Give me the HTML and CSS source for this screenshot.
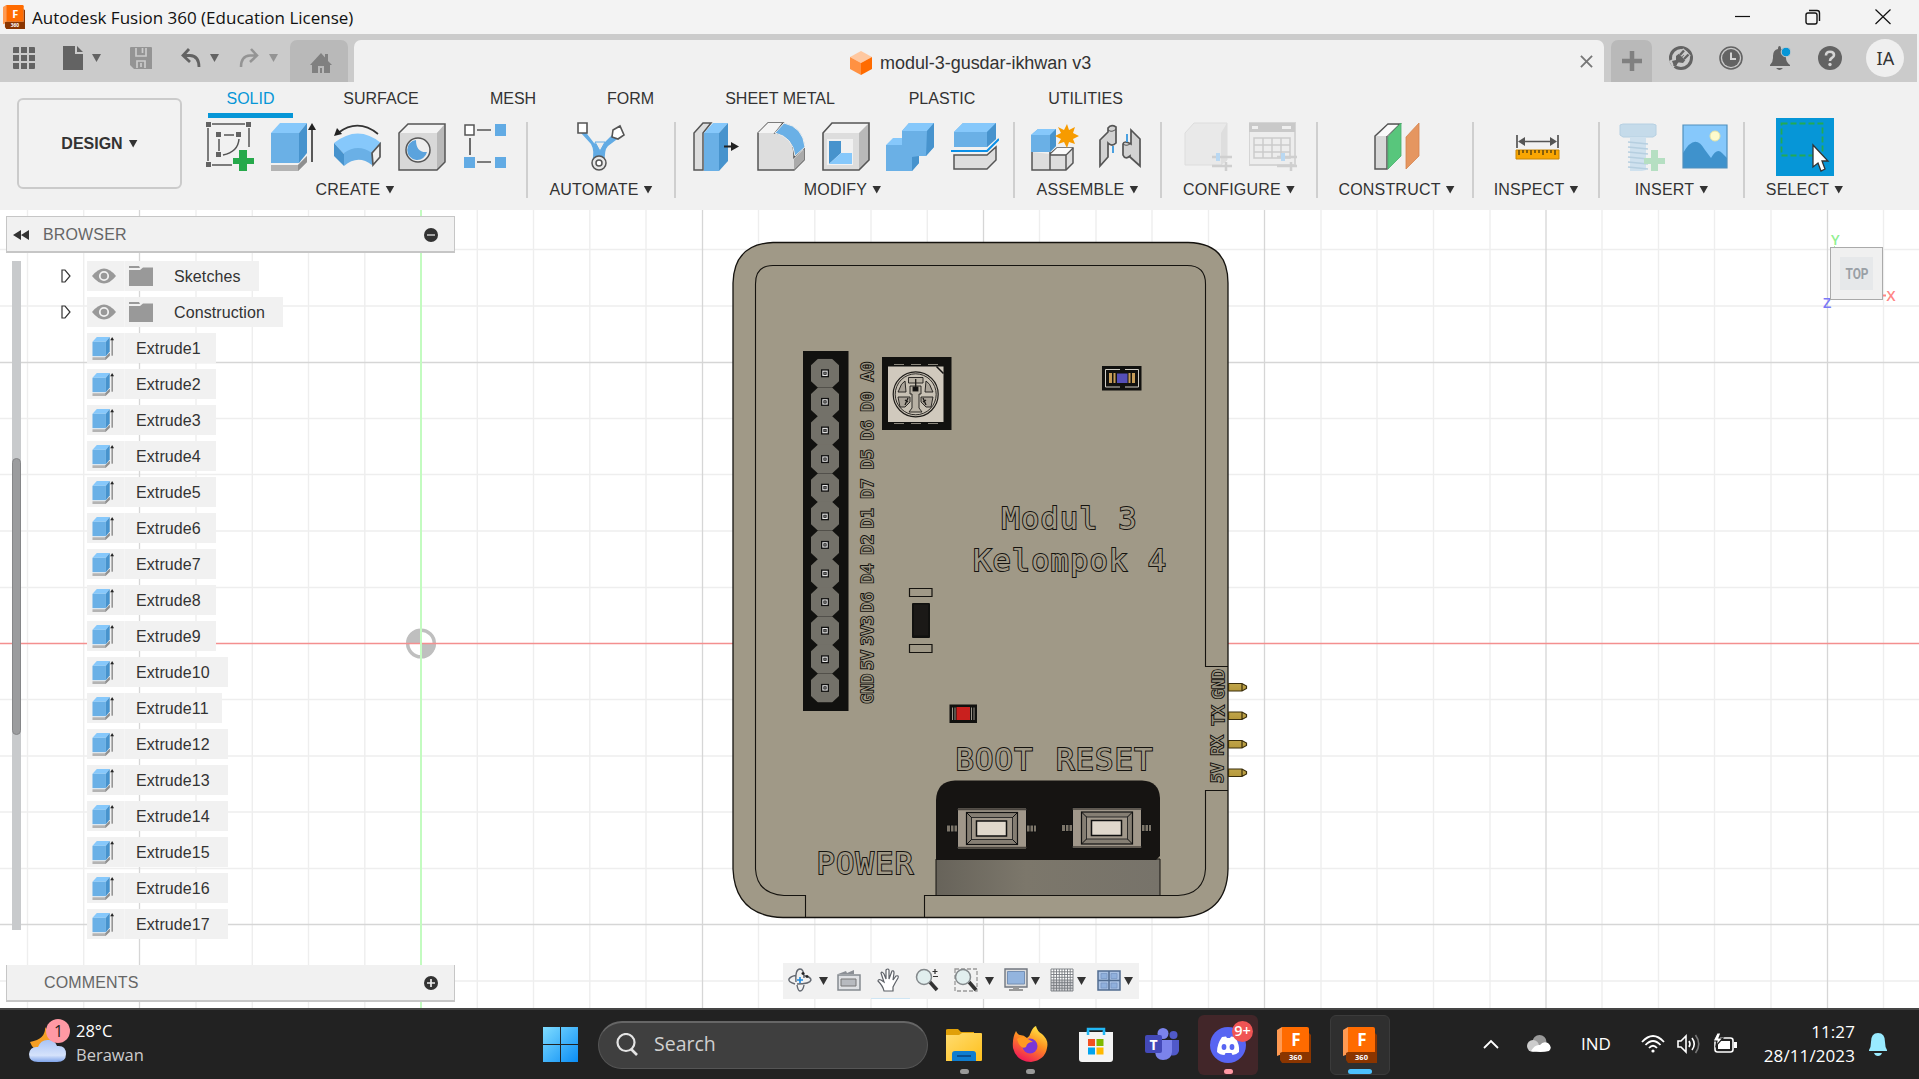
FILE: index.html
```html
<!DOCTYPE html>
<html lang="en">
<head>
<meta charset="utf-8">
<title>Autodesk Fusion 360 (Education License)</title>
<link rel="stylesheet" href="styles.css">
</head>
<body>
<svg class="defs" width="0" height="0">
  <defs>
    <symbol id="fusion" viewBox="0 0 34 36">
      <path d="M0 3L5 0V27L0 29Z" fill="#ff9a52"/>
      <path d="M5 0H30Q32 0 32 2V25H5Z" fill="#ff6b00"/>
      <path d="M32 6L34 8V36H5L3 33V26L5 25H32Z" fill="#8a3500"/>
      <text x="19" y="19" text-anchor="middle" font-family="Open Sans, sans-serif" font-weight="700" font-size="17" fill="#fff">F</text>
      <text x="18.500" y="33" text-anchor="middle" font-family="Open Sans, sans-serif" font-weight="700" font-size="7.500" fill="#fff">360</text>
    </symbol>
    <symbol id="extrude" viewBox="0 0 48 50">
      <path d="M1 43H28L37 34V40L28 49H1Z" fill="#b3b3b3"/>
      <path d="M28 43L37 34V40L28 49Z" fill="#8f8f8f"/>
      <path d="M1 11L10 1H37L29 11Z" fill="#86c8fb"/>
      <rect x="1" y="11" width="28" height="30" fill="#6ab0e6"/>
      <path d="M29 11L37 1V31L29 41Z" fill="#4793cd"/>
      <path d="M42 6V40" stroke="#333" stroke-width="1.600"/>
      <path d="M38 8L42 1L46 8Z" fill="#222"/>
    </symbol>
    <symbol id="eye" viewBox="0 0 24 16">
      <path d="M0 8Q12 -7 24 8Q12 23 0 8Z" fill="#999"/>
      <circle cx="12" cy="8" r="4.200" fill="#999" stroke="#f1f1f1" stroke-width="1.800"/>
    </symbol>
    <symbol id="folder" viewBox="0 0 24 20">
      <path d="M0 0H10L11 2H0ZM0 4H11L14 1.500H24V20H0Z" fill="#999"/>
    </symbol>
    <symbol id="expand" viewBox="0 0 10 14">
      <path d="M1 1V13L4 13L9 7L4 1Z" fill="#fff" stroke="#333" stroke-width="1.200"/>
    </symbol>
    <symbol id="pin" viewBox="-14.500 -14.500 29 29">
      <path d="M-7 -14.500H7L14 -8V8L7 14.500H-7L-14 8V-8Z" fill="#737169"/>
      <rect x="-4" y="-4" width="8" height="8" fill="#111"/>
      <rect x="-2.700" y="-2.700" width="5.400" height="5.400" fill="#e4e4e4"/>
      <rect x="-1.200" y="-1.200" width="2.400" height="2.400" fill="#777" stroke="#111" stroke-width=".7"/>
    </symbol>
    <symbol id="tact" viewBox="0 0 92 42">
      <g fill="#7d766a" stroke="#111"><path d="M1 17.500H12V24.500H1ZM81 17.500H91V24.500H81ZM5 17.500V24.500M8.500 17.500V24.500M84.500 17.500V24.500M88 17.500V24.500"/></g>
      <rect x="12" y=".5" width="69" height="41" fill="#a0978a" stroke="#111"/>
      <path d="M12 2H81M12 40H81" stroke="#4a453f" stroke-width="1.500"/>
      <rect x="21" y="5" width="51" height="32" fill="#857e73" stroke="#111" stroke-width="1.200"/>
      <rect x="26" y="10" width="41" height="22" fill="#a0978a" stroke="#222" stroke-width=".9"/>
      <path d="M21 5L26 10M72 5L67 10M21 37L26 32M72 37L67 32" stroke="#111"/>
      <rect x="31" y="13.500" width="30" height="15" fill="#e0d8cc" stroke="#111" stroke-width="1.500"/>
    </symbol>
    <linearGradient id="win" x1="0" y1="0" x2="1" y2="1"><stop offset="0" stop-color="#7fdcff"/><stop offset="1" stop-color="#0a8df5"/></linearGradient>
    <linearGradient id="cloud" x1="0" y1="0" x2="0" y2="1"><stop offset="0" stop-color="#a9c4f5"/><stop offset=".7" stop-color="#d5e2fb"/><stop offset="1" stop-color="#7ea3ea"/></linearGradient>
    <linearGradient id="fire" x1=".8" y1="0" x2=".3" y2="1"><stop offset="0" stop-color="#fff04a"/><stop offset=".45" stop-color="#ff9020"/><stop offset="1" stop-color="#f0145a"/></linearGradient>
    <linearGradient id="fold" x1="0" y1="0" x2="1" y2="1"><stop offset="0" stop-color="#ffdc70"/><stop offset="1" stop-color="#ffc01c"/></linearGradient>
    <linearGradient id="wall" x1="0" y1="0" x2="1" y2="0"><stop offset="0" stop-color="#67635a"/><stop offset=".4" stop-color="#7c776b"/><stop offset="1" stop-color="#77736a"/></linearGradient>
    <linearGradient id="gold" x1="0" y1="0" x2="0" y2="1"><stop offset="0" stop-color="#c0a54a"/><stop offset="1" stop-color="#b6993c"/></linearGradient>
  </defs>
</svg>

<header class="titlebar">
  <svg class="app-icon" viewBox="0 0 34 36" preserveAspectRatio="none"><use href="#fusion"/></svg>
  <span class="app-title">Autodesk Fusion 360 (Education License)</span>
  <div class="window-controls">
    <svg viewBox="0 0 16 16"><path d="M0 7.500H15" stroke="#111" stroke-width="1.200"/></svg>
    <svg viewBox="0 0 16 16" fill="none" stroke="#111" stroke-width="1.400"><rect x="1" y="4" width="11" height="11" rx="2"/><path d="M4 1.500H12Q14.500 1.500 14.500 4V12"/></svg>
    <svg viewBox="0 0 16 16" stroke="#111" stroke-width="1.200"><path d="M.5 .5L15.500 15M15.500 .5L.5 15"/></svg>
  </div>
</header>

<nav class="tabbar">
  <div class="quick">
    <svg class="q-grid" viewBox="0 0 22 22" fill="#636363"><path d="M0 1Q0 0 1 0H6V6H0ZM8 0H14V6H8ZM16 0H21Q22 0 22 1V6H16ZM0 8H6V14H0ZM8 8H14V14H8ZM16 8H22V14H16ZM0 16H6V22H1Q0 22 0 21ZM8 16H14V22H8ZM16 16H22V21Q22 22 21 22H16Z"/></svg>
    <svg class="q-file" viewBox="0 0 20 24"><path d="M0 0H12V8H20V24H0ZM14 0L20 6H14Z" fill="#636363"/></svg>
    <i class="caret dim"></i>
    <svg class="q-save" viewBox="0 0 22 22"><path d="M1 0H21Q22 0 22 1V22H4L0 18V1Q0 0 1 0Z" fill="#949494"/><path d="M6 1V9H16V1M7 21V14H15V21M11 16V20M12.500 1V6" fill="none" stroke="#cbcbcb" stroke-width="1.700"/></svg>
    <svg class="q-undo" viewBox="0 0 20 20" fill="none" stroke="#636363" stroke-width="2.800"><path d="M8 1L2 7.500L9 14M2 7.500H9Q18 8 18 19"/></svg>
    <i class="caret dim"></i>
    <svg class="q-redo" viewBox="0 0 20 20" fill="none" stroke="#949494" stroke-width="2.500"><path d="M12 1L18 7.500L11 14M18 7.500H11Q2 8 2 19"/></svg>
    <i class="caret faint"></i>
  </div>
  <div class="home-tab"><svg viewBox="0 0 22 20"><path d="M11 0L15 4.500V1H18V8L22 12H20V20H14V13H8V20H2V12H0ZM10 15H12V20H10Z" fill="#808080"/></svg></div>
  <div class="doc-tab">
    <svg class="doc-icon" viewBox="0 0 22 24"><path d="M11 0L22 6L11 12L0 6Z" fill="#ffc8a0"/><path d="M0 6L11 12V24L0 18Z" fill="#ff9142"/><path d="M22 6L11 12V24L22 18Z" fill="#ff6b00"/></svg>
    <span>modul-3-gusdar-ikhwan v3</span>
    <svg class="doc-close" viewBox="0 0 14 14" stroke="#777" stroke-width="2"><path d="M1 1L13 13M13 1L1 13"/></svg>
  </div>
  <div class="add-tab"><svg viewBox="0 0 20 20"><path d="M10 0V20M0 10H20" stroke="#808080" stroke-width="4.500"/></svg></div>
  <div class="status-icons">
    <svg viewBox="0 0 24 24"><circle cx="12" cy="12" r="10.500" fill="none" stroke="#636363" stroke-width="3"/><path d="M0 15L6 12L9 18L4 22Z" fill="#cbcbcb"/><path d="M3 15L7 14L8 19L5 20Z" fill="#636363"/><path d="M7 16V10L12 6L18 12L14 17Z" fill="#636363"/><path d="M11 9L16 4M15 13L20 8" stroke="#cbcbcb" stroke-width="5"/><path d="M11 9L15 4.500M15 13L19.500 8.500M9 15L5 20" stroke="#636363" stroke-width="2.400"/></svg>
    <svg viewBox="0 0 24 24"><circle cx="12" cy="12" r="11" fill="none" stroke="#636363" stroke-width="1.600"/><circle cx="12" cy="12" r="8.900" fill="#636363"/><path d="M12 6.500V13H17" fill="none" stroke="#d5d5d5" stroke-width="2"/></svg>
    <svg viewBox="0 0 24 24"><path d="M2 19Q5 16 5 12V10Q5 4 10 3Q10 0 11.500 0Q13 0 13 3Q18 4 18 10V12Q18 16 22 19V20H2ZM8 22H15Q13 24 11.500 24Q10 24 8 22Z" fill="#636363"/><circle cx="18" cy="6" r="4.800" fill="#0696d7" stroke="#cbcbcb"/></svg>
    <svg viewBox="0 0 24 24"><circle cx="12" cy="12" r="12" fill="#636363"/><path d="M8 9.500Q8 5.800 12 5.800Q16 5.800 16 9Q16 11 13.800 12Q12 13 12 15" fill="none" stroke="#d5d5d5" stroke-width="2.600"/><circle cx="12" cy="18.500" r="1.700" fill="#d5d5d5"/></svg>
    <div class="avatar">IA</div>
  </div>
</nav>

<section class="ribbon">
  <button class="workspace">DESIGN <i class="caret"></i></button>
  <div class="toolbox">
    <div class="tabs">
      <span class="t1 active">SOLID</span><span class="t2">SURFACE</span><span class="t3">MESH</span><span class="t4">FORM</span><span class="t5">SHEET METAL</span><span class="t6">PLASTIC</span><span class="t7">UTILITIES</span>
    </div>
    <div class="groups">
      <div class="group g-create">
        <div class="icons">
          <svg viewBox="0 0 48 50"><g fill="none" stroke="#555" stroke-width="1.500"><path d="M2 6V39M6 2H39M43 6V25M6 43H26M13 17V29M18 13H28M33 17Q32 30 17 33"/></g><path d="M0 0H5V5H0ZM40 0H45V5H40ZM0 40H5V45H0ZM10 10H15V15H10ZM30 10H35V15H30ZM10 30H15V35H10Z" fill="#636363"/><path d="M33 28H41V36H48V42H41V49H33V42H27V36H33Z" fill="#26a94b"/></svg>
          <svg viewBox="0 0 48 50"><use href="#extrude"/></svg>
          <svg viewBox="0 0 48 50"><path d="M0 21Q24 2 47 21L38 32Q24 24 10 32Z" fill="#86c8fb"/><path d="M0 21V34L10 44V32Z" fill="#4793cd"/><path d="M10 31Q24 21 38 31V43Q24 32 10 44Z" fill="#6ab0e6"/><path d="M38 31L46 22V35L39 43Z" fill="#eee" stroke="#555" stroke-width="1.700"/><path d="M4 11Q24 -4 44 12" fill="none" stroke="#333" stroke-width="1.700"/><path d="M0 14L3 6L8 12Z" fill="#222"/></svg>
          <svg viewBox="0 0 48 50"><path d="M1 11L10 2H47V40L39 48H1Z" fill="#d8d8d8"/><path d="M1 11L10 2H47L39 11Z" fill="#f3f3f3"/><path d="M39 11L47 2V40L39 48Z" fill="#b9b9b9"/><path d="M1 11L10 2H47V40L39 48H1Z" fill="none" stroke="#555" stroke-width="1.500"/><circle cx="20" cy="28" r="12" fill="#eee" stroke="#555" stroke-width="1.500"/><path d="M18 18A10 10 0 1 0 29 30Q18 31 18 18Z" fill="#5ba3dd"/></svg>
          <svg viewBox="0 0 48 50"><path d="M15 8H29M8 16V33M15 40H29" stroke="#555" stroke-width="1.700"/><path d="M3 3H12V13H3Z" fill="#fff" stroke="#555" stroke-width="1.500"/><path d="M33 2H44V14H33ZM2 35H13V46H2ZM33 35H44V46H33Z" fill="#62abe4"/></svg>
        </div>
        <div class="label">CREATE <i class="caret"></i></div>
      </div>
      <div class="group g-automate">
        <div class="icons"><svg viewBox="0 0 48 50"><path d="M7 8L17 21Q22 24 28 20L38 10L43 15L31 24Q27 28 28 40A8 8 0 0 1 15 40Q18 29 14 22L4 11Z" fill="#62abe4"/><path d="M18 20H28L23 29Z" fill="#eee" stroke="#62abe4"/><path d="M1 1H10V11H1ZM36 8L43 4L47 13L41 17L35 15Z" fill="#fff" stroke="#555" stroke-width="1.600"/><circle cx="22" cy="41" r="7" fill="#e8e8e8" stroke="#555" stroke-width="1.500"/><circle cx="22" cy="41" r="3" fill="#fff" stroke="#555" stroke-width="1.500"/></svg></div>
        <div class="label">AUTOMATE <i class="caret"></i></div>
      </div>
      <div class="group g-modify">
        <div class="icons">
          <svg viewBox="0 0 48 50"><path d="M1 48V11L10 1H18L10 11V48Z" fill="#ddd" stroke="#555" stroke-width="1.500"/><path d="M11 11H26V49H11Z" fill="#6ab0e6"/><path d="M11 11L20 1H35L26 11Z" fill="#86c8fb"/><path d="M26 11L35 1V39L26 49Z" fill="#4793cd"/><path d="M31 24.500H39" stroke="#222" stroke-width="2"/><path d="M38 20L46 24.500L38 29Z" fill="#222"/></svg>
          <svg viewBox="0 0 48 50"><path d="M1 48V11L11 1H26L18 11Q38 13 37 35L47 25V38L37 48Z" fill="#ddd" stroke="#555" stroke-width="1.500"/><path d="M18 11L27 1Q46 5 48 25L38 34Q36 15 18 11Z" fill="#6ab0e6" stroke="#eee"/><path d="M1 11L11 1H25L17 11Z" fill="#f4f4f4"/><path d="M37 37L47 27V38L37 48Z" fill="#aaa"/></svg>
          <svg viewBox="0 0 48 50"><path d="M1 11L10 1H47V38L37 48H1Z" fill="#f3f3f3"/><path d="M1 11H37V48H1Z" fill="#ddd"/><path d="M37 11L47 1V38L37 48Z" fill="#b9b9b9"/><path d="M1 11L10 1H47V38L37 48H1Z" fill="none" stroke="#555" stroke-width="1.600"/><path d="M5 17H31V43H5Z" fill="#f1f1f1"/><path d="M7 19H19V31L7 42Z" fill="#4793cd"/><path d="M7 42L19 31H30V42Z" fill="#86c8fb"/></svg>
          <svg viewBox="0 0 48 50"><path d="M0 23H16V9L23 1H48V25L40 34H33V41L26 49H0Z" fill="#6ab0e6"/><path d="M16 9L23 1H48L41 9ZM0 23L7 16H16V23Z" fill="#86c8fb"/><path d="M41 9L48 1V25L40 34ZM33 34V41L26 49V35Z" fill="#4793cd"/></svg>
          <svg viewBox="0 0 48 50"><path d="M3 10L12 1H45V17L36 25H3Z" fill="#6ab0e6"/><path d="M3 10L12 1H45L36 10Z" fill="#86c8fb"/><path d="M36 10L45 1V17L36 25Z" fill="#4793cd"/><path d="M0 29H36L48 17" fill="none" stroke="#0a90e8" stroke-width="2"/><path d="M3 33H36L45 25V38L36 47H3Z" fill="#ddd" stroke="#555" stroke-width="1.500"/></svg>
        </div>
        <div class="label">MODIFY <i class="caret"></i></div>
      </div>
      <div class="group g-assemble">
        <div class="icons">
          <svg viewBox="0 0 48 50"><path d="M1 30V48H35L42 41V26H26L19 32" fill="#ddd" stroke="#555" stroke-width="1.500"/><path d="M19 30V48M19 33H35V48M35 33L42 26" fill="none" stroke="#555" stroke-width="1.500"/><path d="M20 32L26 26H41L35 32Z" fill="#fafafa"/><path d="M0 13L7 7H25V24L19 30H0Z" fill="#6ab0e6"/><path d="M0 13L7 7H25L19 13Z" fill="#86c8fb"/><path d="M19 13L25 7V24L19 30Z" fill="#4793cd"/><path d="M36 2L38 8L44 5L42 11L48 14L42 17L44 22L38 20L36 26L33 20L27 22L30 17L24 14L30 11L27 5L33 8Z" fill="#f79b00"/></svg>
          <svg viewBox="0 0 48 50"><path d="M4 44V18L12 10V6Q15 2 20 5V21Q16 25 12 21V35ZM44 44V17L35 8V22Q28 18 27 22V33Q29 38 34 34V35Z" fill="#d2d2d2" stroke="#555" stroke-width="1.700"/><path d="M12 8Q16 11 20 7M27 22Q31 25 35 21" fill="none" stroke="#555"/><path d="M17 24V31M31 12V20" stroke="#4aa0e0" stroke-width="2"/></svg>
        </div>
        <div class="label">ASSEMBLE <i class="caret"></i></div>
      </div>
      <div class="group g-configure">
        <div class="icons">
          <svg viewBox="0 0 48 50"><path d="M1 11L10 1H43V38L37 43H1Z" fill="#e9e9e9" stroke="#ddd"/><path d="M37 11L43 1V38L37 43Z" fill="#dedede"/><path d="M28 35H48M28 44H48M34 31V39M42 40V49" stroke="#cfcfcf" stroke-width="2.500"/><path d="M34 31V39" stroke="#b9d8f2" stroke-width="4"/></svg>
          <svg viewBox="0 0 48 50"><path d="M0 1H46V43H0Z" fill="#ededed" stroke="#d5d5d5" stroke-width="2"/><path d="M0 1H46V10H0Z" fill="#c9c9c9"/><path d="M3 4H9V7H3ZM33 4H42V7H33Z" fill="#efefef"/><path d="M5 16H41V36H5ZM5 23H41M5 30H41M14 16V36M23 16V36M32 16V36" fill="none" stroke="#cbcbcb" stroke-width="1.500"/><path d="M28 35H48M28 44H48M42 40V49" stroke="#cfcfcf" stroke-width="2.500"/><path d="M34 31V39" stroke="#b9d8f2" stroke-width="4"/></svg>
        </div>
        <div class="label">CONFIGURE <i class="caret"></i></div>
      </div>
      <div class="group g-construct">
        <div class="icons"><svg viewBox="0 0 48 50"><path d="M2 47V14L15 2H27L14 14V47Z" fill="#d8d8d8" stroke="#555" stroke-width="1.500"/><path d="M4 14L15 3H25L14 14Z" fill="#fafafa"/><path d="M15 15L28 1V34L15 47Z" fill="#58c67c" stroke="#45b06a" stroke-width=".8"/><path d="M33 15L46 1V34L33 47Z" fill="#e59660" stroke="#d5844e" stroke-width=".8"/></svg></div>
        <div class="label">CONSTRUCT <i class="caret"></i></div>
      </div>
      <div class="group g-inspect">
        <div class="icons"><svg viewBox="0 0 48 50"><path d="M3 13V26M44 13V26M7 19.500H40" stroke="#555" stroke-width="1.700"/><path d="M4 19.500L11 15V24ZM43 19.500L36 15V24Z" fill="#555"/><path d="M2 28H45V37H2Z" fill="#f9a602" stroke="#c98605"/><path d="M5 28V33M9 28V31M13 28V31M17 28V33M21 28V31M25 28V31M29 28V33M33 28V31M37 28V31M41 28V33" stroke="#4a3a10" stroke-width="1.300"/></svg></div>
        <div class="label">INSPECT <i class="caret"></i></div>
      </div>
      <div class="group g-insert">
        <div class="icons">
          <svg viewBox="0 0 48 50"><path d="M2 3L5 2H35L38 3V13L35 15H5L2 13Z" fill="#c5dbea" stroke="#b6d0e2"/><path d="M12 15H28V48L24 49H12Z" fill="#cfe1ee"/><path d="M10 20L30 22M10 25L30 27M10 30L30 32M10 35L30 37M10 40L30 42M10 45L30 47" stroke="#b6cfe0" stroke-width="1.500"/><path d="M33 28H40V36H47V42H40V49H33V42H26V36H33Z" fill="#b5dfc2"/></svg>
          <svg viewBox="0 0 48 50"><path d="M2 3H46V46H2Z" fill="#86c8fb"/><path d="M2 31Q14 10 24 28L30 36Q36 25 41 31L46 36V46H2Z" fill="#3f92cc"/><circle cx="34" cy="14" r="5" fill="#fdfbcd" stroke="#e4e4a8"/><path d="M2 3H46V46H2Z" fill="none" stroke="#5090bd" stroke-width="1.200"/></svg>
        </div>
        <div class="label">INSERT <i class="caret"></i></div>
      </div>
      <div class="group g-select">
        <div class="icons"><svg class="select-icon" viewBox="0 0 58 58"><path d="M0 0H58V58H0Z" fill="#0696d7"/><path d="M5.500 5.500H46.500V37.500H5.500Z" fill="none" stroke="#23aa55" stroke-width="1.800" stroke-dasharray="6 3"/><path d="M37 27V49L42 45L45 53L49 51L46 43H52Z" fill="#fff" stroke="#333" stroke-width="1.300"/></svg></div>
        <div class="label">SELECT <i class="caret"></i></div>
      </div>
    </div>
  </div>
</section>

<main class="viewport">
  <svg class="scene" viewBox="0 210 1919 798" width="1919" height="798">
    <g fill="none" stroke="#eeeeee" stroke-width="1.400">
      <path d="M27.500 210V1008M83.700 210V1008M196 210V1008M252.300 210V1008M308.500 210V1008M364.800 210V1008M477.300 210V1008M533.500 210V1008M589.800 210V1008M646 210V1008M758.500 210V1008M814.800 210V1008M871 210V1008M927.300 210V1008M1039.500 210V1008M1096 210V1008M1152 210V1008M1208.500 210V1008M1321 210V1008M1377 210V1008M1433.500 210V1008M1490 210V1008M1602 210V1008M1658.500 210V1008M1714.500 210V1008M1771 210V1008M1883.500 210V1008"/>
      <path d="M0 249.500H1919M0 306H1919M0 418.500H1919M0 474.500H1919M0 531H1919M0 587.500H1919M0 699.500H1919M0 756H1919M0 812H1919M0 868.500H1919M0 981H1919"/>
    </g>
    <path d="M139.500 210V1008M702.500 210V1008M983.500 210V1008M1264.500 210V1008M1546 210V1008M1827.500 210V1008M0 362.500H1919M0 924.500H1919" stroke="#d6d6d6" stroke-width="1.300"/>
    <circle cx="421" cy="643.500" r="13.300" fill="none" stroke="#bfbfbf" stroke-width="3.500"/>
    <path d="M421 643.500V629A14.500 14.500 0 0 0 406.500 643.500ZM421 643.500V658A14.500 14.500 0 0 0 435.500 643.500Z" fill="#bfbfbf"/>
    <path d="M0 643.500H1919" stroke="#f48f8f" stroke-width="1.300"/>
    <path d="M421 210V1008" stroke="#c3fbc0" stroke-width="2"/>

    <path d="M773 242.500H1188Q1228 243 1228 283V869Q1227 916 1178 917.500H783Q735 916 733 869V283Q734 244 773 242.500Z" fill="#a09987" stroke="#15130f" stroke-width="1.300"/>
    <g fill="none" stroke="#15130f" stroke-width="1.100">
      <path d="M773 265.500H1187Q1205.500 265.500 1205.500 284V666.500H1228M1228 790.500H1205.500V869Q1204 894 1178 895.500H924.500V917.500M805.500 917.500V895.500H784Q757 894 755.500 869V284Q755.500 265.500 773 265.500"/>
    </g>
    <rect x="803" y="351" width="45.500" height="360" fill="#11110f"/>
    <g>
      <use href="#pin" x="810.500" y="358.800" width="29" height="29"/><use href="#pin" x="810.500" y="387.400" width="29" height="29"/><use href="#pin" x="810.500" y="416" width="29" height="29"/><use href="#pin" x="810.500" y="444.600" width="29" height="29"/><use href="#pin" x="810.500" y="473.200" width="29" height="29"/><use href="#pin" x="810.500" y="501.800" width="29" height="29"/><use href="#pin" x="810.500" y="530.400" width="29" height="29"/><use href="#pin" x="810.500" y="559" width="29" height="29"/><use href="#pin" x="810.500" y="587.600" width="29" height="29"/><use href="#pin" x="810.500" y="616.200" width="29" height="29"/><use href="#pin" x="810.500" y="644.800" width="29" height="29"/><use href="#pin" x="810.500" y="673.400" width="29" height="29"/>
    </g>
    <g class="silk-small">
      <text transform="translate(872.500 371.500) rotate(-90)">A0</text>
      <text transform="translate(872.500 401.500) rotate(-90)">D0</text>
      <text transform="translate(872.500 430) rotate(-90)">D6</text>
      <text transform="translate(872.500 459) rotate(-90)">D5</text>
      <text transform="translate(872.500 488.500) rotate(-90)">D7</text>
      <text transform="translate(872.500 518) rotate(-90)">D1</text>
      <text transform="translate(872.500 544.500) rotate(-90)">D2</text>
      <text transform="translate(872.500 573.500) rotate(-90)">D4</text>
      <text transform="translate(872.500 602) rotate(-90)">D6</text>
      <text transform="translate(872.500 630.500) rotate(-90)">3V3</text>
      <text transform="translate(872.500 660) rotate(-90)">5V</text>
      <text transform="translate(872.500 688.500) rotate(-90)">GND</text>
      <text transform="translate(1223.500 684) rotate(-90)">GND</text>
      <text transform="translate(1223.500 715.500) rotate(-90)">TX</text>
      <text transform="translate(1223 745.500) rotate(-90)">RX</text>
      <text transform="translate(1222.500 773) rotate(-90)">5V</text>
    </g>
    <rect x="882" y="357" width="69.500" height="73" fill="#11110f"/>
    <path d="M894 364.500H904M911 364.500H921M928 364.500H938M894 423.500H904M911 423.500H921M928 423.500H938" stroke="#8a867c" stroke-width="1.200"/>
    <rect x="888" y="366.500" width="55.500" height="55.500" fill="#d0c9bd"/>
    <path d="M936.500 366.500L943.500 373.500" stroke="#111" stroke-width="1.500"/>
    <g fill="none" stroke="#1d1b18" stroke-width=".9">
      <circle cx="915.700" cy="394.300" r="22.500" fill="#c8c1b4" stroke-width="1.200"/><circle cx="915.700" cy="394.300" r="20.500"/>
      <path d="M899 390Q901 383 905 381L906 392H898ZM932 390Q930 383 926 381L925 392H933ZM898 397H910V402L905 407H900ZM933 397H921V402L926 407H931Z" fill="#aaa398"/>
      <path d="M908.500 377.500H923V383H908.500ZM910 386H921V394H919V408L922 412H909L912 408V394H910Z" fill="#b8b1a4"/>
      <path d="M915.700 379V391M905 405L908 398M926 405L923 398M905 400L908 402M926 400L923 402" stroke-width="1.300"/>
      <rect x="913" y="387" width="5" height="4" fill="#111"/>
    </g>
    <rect x="1102" y="366" width="39.500" height="24.500" fill="#11110f"/>
    <path d="M1120 369.500H1105.500V387H1120M1125 369.500H1138.500V387H1125" fill="none" stroke="#cfccc4"/>
    <path d="M1109 373H1112V383H1109ZM1113.500 373H1115.500V383H1113.500ZM1128.500 373H1130.500V383H1128.500ZM1132 373H1135V383H1132Z" fill="#c69d59"/>
    <rect x="1117" y="373.500" width="10.500" height="9.500" fill="#554fb8"/>
    <path d="M909.500 588.500H932V596.500H909.500ZM909.500 644.500H932V652.500H909.500Z" fill="none" stroke="#15130f" stroke-width="1.200"/>
    <rect x="912" y="603" width="18" height="35" rx="1" fill="#11110f"/><rect x="914" y="604.500" width="14" height="31" fill="#1b1917"/>
    <rect x="949.500" y="704.500" width="27.500" height="18.500" fill="#11110f"/>
    <path d="M952.500 707.500V720M955 707.500V720M971.500 707.500V720M974 707.500V720" stroke="#9a948a"/>
    <rect x="956.500" y="707" width="13.500" height="13" fill="#c9201e"/>
    <g class="silk">
      <text x="1001.500" y="529" textLength="135">Modul 3</text>
      <text x="973" y="570.500" textLength="193">Kelompok 4</text>
      <text x="955.500" y="769.500" textLength="77">BOOT</text>
      <text x="1056" y="769.500" textLength="96.500">RESET</text>
      <text x="816.500" y="873.500" textLength="96.500">POWER</text>
    </g>
    <path d="M936 859H1160V895.500H936Z" fill="url(#wall)" stroke="#15130f"/>
    <path d="M936 860V800Q937 781 955 780.500H1142Q1159 781 1160 798V856L1156 860Z" fill="#161412"/>
    <use href="#tact" x="945.500" y="807.500" width="92" height="42"/>
    <use href="#tact" x="1060.500" y="807" width="92" height="42"/>
    <g fill="url(#gold)" stroke="#3a2e0c" stroke-width="1.200">
      <path d="M1228.500 683.500H1242L1246.500 686V688.500L1242 691H1228.500ZM1242 683.500V691"/>
      <path d="M1228.500 712H1242L1246.500 714.500V717L1242 719.500H1228.500ZM1242 712V719.500"/>
      <path d="M1228.500 740.500H1242L1246.500 743V745.500L1242 748H1228.500ZM1242 740.500V748"/>
      <path d="M1228.500 769H1242L1246.500 771.500V774L1242 776.500H1228.500ZM1242 769V776.500"/>
    </g>
    <g font-family="Open Sans, sans-serif" font-size="14.500" font-weight="600">
      <path d="M1834.500 246V300" stroke="#a4f5a4"/>
      <text x="1831" y="244.500" fill="#90f090">Y</text>
      <text x="1886.500" y="300.500" fill="#ff8585">X</text>
      <text x="1823" y="308" fill="#7a7af8">Z</text>
      <path d="M1883 295.500H1886" stroke="#ff8585" stroke-width="2"/>
      <rect x="1830.500" y="247.500" width="52" height="52" fill="#f0f0f0" stroke="#aaa"/>
      <rect x="1840" y="257" width="33" height="33" fill="#e6e8ea"/>
      <text x="1857" y="279" text-anchor="middle" font-family="Roboto, sans-serif" font-size="15" font-weight="700" textLength="23" lengthAdjust="spacingAndGlyphs" fill="#999fa5">TOP</text>
    </g>
  </svg>

  <aside class="browser">
    <div class="panel-head">
      <svg class="collapse" viewBox="0 0 16 10"><path d="M8 0V10L0 5ZM16 0V10L8 5Z" fill="#333"/></svg>
      <span>BROWSER</span>
      <svg class="knob" viewBox="0 0 14 14"><circle cx="7" cy="7" r="7" fill="#333"/><path d="M3 7H11" stroke="#ccc" stroke-width="1.500"/></svg>
    </div>
    <div class="tree">
      <div class="scroll"><div class="thumb"></div></div>
      <ul>
        <li class="folder-row"><svg class="tw"><use href="#expand"/></svg><div class="cell w172"><svg class="eye"><use href="#eye"/></svg><svg class="fold"><use href="#folder"/></svg><span>Sketches</span></div></li>
        <li class="folder-row"><svg class="tw"><use href="#expand"/></svg><div class="cell w196"><svg class="eye"><use href="#eye"/></svg><svg class="fold"><use href="#folder"/></svg><span>Construction</span></div></li>
        <li><div class="cell w129"><svg class="ext"><use href="#extrude"/></svg><span>Extrude1</span></div></li>
        <li><div class="cell w129"><svg class="ext"><use href="#extrude"/></svg><span>Extrude2</span></div></li>
        <li><div class="cell w129"><svg class="ext"><use href="#extrude"/></svg><span>Extrude3</span></div></li>
        <li><div class="cell w129"><svg class="ext"><use href="#extrude"/></svg><span>Extrude4</span></div></li>
        <li><div class="cell w129"><svg class="ext"><use href="#extrude"/></svg><span>Extrude5</span></div></li>
        <li><div class="cell w129"><svg class="ext"><use href="#extrude"/></svg><span>Extrude6</span></div></li>
        <li><div class="cell w129"><svg class="ext"><use href="#extrude"/></svg><span>Extrude7</span></div></li>
        <li><div class="cell w129"><svg class="ext"><use href="#extrude"/></svg><span>Extrude8</span></div></li>
        <li><div class="cell w129"><svg class="ext"><use href="#extrude"/></svg><span>Extrude9</span></div></li>
        <li><div class="cell w141"><svg class="ext"><use href="#extrude"/></svg><span>Extrude10</span></div></li>
        <li><div class="cell w135"><svg class="ext"><use href="#extrude"/></svg><span>Extrude11</span></div></li>
        <li><div class="cell w141"><svg class="ext"><use href="#extrude"/></svg><span>Extrude12</span></div></li>
        <li><div class="cell w141"><svg class="ext"><use href="#extrude"/></svg><span>Extrude13</span></div></li>
        <li><div class="cell w141"><svg class="ext"><use href="#extrude"/></svg><span>Extrude14</span></div></li>
        <li><div class="cell w141"><svg class="ext"><use href="#extrude"/></svg><span>Extrude15</span></div></li>
        <li><div class="cell w141"><svg class="ext"><use href="#extrude"/></svg><span>Extrude16</span></div></li>
        <li><div class="cell w141"><svg class="ext"><use href="#extrude"/></svg><span>Extrude17</span></div></li>
      </ul>
    </div>
    <div class="panel-head comments">
      <span>COMMENTS</span>
      <svg class="knob" viewBox="0 0 14 14"><circle cx="7" cy="7" r="7" fill="#333"/><path d="M3 7H11M7 3V11" stroke="#eee" stroke-width="1.700"/></svg>
    </div>
  </aside>

  <div class="navbar">
    <svg class="n1" viewBox="0 0 24 24" fill="none" stroke="#636870" stroke-width="1.400"><path d="M7 16Q0 14 1 11Q3 8 8 7.500M16 7.500Q23 9 23 12Q22 16 9 16M8 14Q7 1 12 1Q16 1 16 10M9 17Q10 23 12 23Q15 23 16 17"/><path d="M12 9V15M9 12H15" stroke="#1d8ae0" stroke-width="1.600"/><path d="M15 4V7M13.500 5.500H16.500M19 7V10M17.500 8.500H20.500" stroke="#222" stroke-width="1.300"/></svg>
    <i class="caret"></i>
    <svg class="n2" viewBox="0 0 24 24"><path d="M1 6L9 3L10 5L17 2V6Z" fill="#8b8f95"/><path d="M1 7H23V22H1Z" fill="#dfe1e4" stroke="#858a90" stroke-width="1.500"/><path d="M4 11H19V18H4Z" fill="#b7babf" stroke="#777"/></svg>
    <svg class="n3" viewBox="0 0 24 24"><path d="M8 23Q7 18 2 13Q2 11 5 12L8 14L5 5Q6 3 8 6L10 11V2Q12 0 13 2V11L16 3Q18 2 18 5L17 12L20 8Q23 7 22 10Q19 15 17 19V23Z" fill="#fff" stroke="#5d6167" stroke-width="1.200"/></svg>
    <svg class="n4" viewBox="0 0 24 24"><path d="M14 13L22 22" stroke="#333" stroke-width="3.600"/><circle cx="9" cy="9" r="7.500" fill="#e1eeee" stroke="#84898c" stroke-width="1.500"/><path d="M20 1V6M17.500 3.500H22.500M18 8.500H23" stroke="#333" stroke-width="1.200"/></svg>
    <svg class="n5" viewBox="0 0 24 24"><path d="M1 1H23V23H1Z" fill="none" stroke="#999" stroke-width="1.300" stroke-dasharray="4 2"/><path d="M15 14L22 22" stroke="#333" stroke-width="3.600"/><circle cx="9" cy="9" r="7.500" fill="#e1eeee" stroke="#84898c" stroke-width="1.500"/></svg>
    <i class="caret"></i>
    <svg class="n6" viewBox="0 0 24 24"><path d="M1 1H23V19H1Z" fill="#ddd" stroke="#717780" stroke-width="1.400"/><path d="M3.500 3.500H20.500V16H3.500Z" fill="#93b4de" stroke="#7590b5"/><path d="M9 19H15V21H19V23H5V21H9Z" fill="#999"/></svg>
    <i class="caret"></i>
    <svg class="n7" viewBox="0 0 24 24"><path d="M1 1H23V23H1Z" fill="#fff"/><path d="M1 12H23V23H1Z" fill="#d2d2d5"/><path d="M1 1H23V23H1ZM1 3.800H23M1 6.500H23M1 9.300H23M1 12H23M1 14.700H23M1 17.500H23M1 20.200H23M3.800 1V23M6.500 1V23M9.300 1V23M12 1V23M14.700 1V23M17.500 1V23M20.200 1V23" fill="none" stroke="#777b80" stroke-width=".9"/></svg>
    <i class="caret"></i>
    <svg class="n8" viewBox="0 0 24 24"><path d="M1 3H23V22H1Z" fill="#a9c2e4" stroke="#516c90" stroke-width="1.500"/><path d="M12 3V22M1 12.500H23" stroke="#516c90" stroke-width="1.500"/><path d="M4 5.500H10V10.500H4ZM14 5.500H20V10.500H14ZM4 15H10V20H4ZM14 15H20V20H14Z" fill="#8fb0dc" stroke="#7898c4" stroke-width=".8"/></svg>
    <i class="caret"></i>
  </div>
</main>

<footer class="taskbar">
  <div class="weather">
    <svg viewBox="0 0 42 46"><path d="M16 8Q17 20 1 23Q4 32 14 33Q26 28 24 14Q18 13 16 8Z" fill="#f59f25"/><path d="M9 43Q0 43 0 35Q1 27 9 28Q12 20 20 21Q26 21 28 27Q37 26 37 35Q37 43 28 43Z" fill="url(#cloud)"/><circle cx="29" cy="12" r="12" fill="#ff99a4"/><text x="29.500" y="18" text-anchor="middle" font-family="Open Sans, sans-serif" font-size="16" fill="#222">1</text></svg>
    <div><b>28°C</b><small>Berawan</small></div>
  </div>
  <div class="start"><svg viewBox="0 0 35 35"><path d="M0 0H17V17H0ZM18 0H35V17H18ZM0 18H17V35H0ZM18 18H35V35H18Z" fill="url(#win)"/></svg></div>
  <div class="search"><svg viewBox="0 0 23 23"><circle cx="10" cy="9.500" r="8.500" fill="none" stroke="#e4e4e4" stroke-width="2.200"/><path d="M15 16L21 22" stroke="#e4e4e4" stroke-width="2.600"/></svg>Search</div>
  <div class="apps">
    <div class="app running"><svg viewBox="0 0 38 38"><path d="M1 4Q1 3 3 3H13L16 6H29V12H1Z" fill="#e0a008"/><path d="M1 9L14 9L17 7H36Q37 7 37 8V34Q37 35 36 35H1Z" fill="url(#fold)"/><path d="M7 35V28Q7 25 10 25H28Q31 25 31 28V35Z" fill="#0f7dd0"/><path d="M12 30H26" stroke="#0a4f8f" stroke-width="2"/></svg></div>
    <div class="app running"><svg viewBox="0 0 38 38"><path d="M20 6Q22 1 25 0Q26 5 31 8Q38 14 36 22Q34 34 20 36Q5 35 2 22Q1 12 5 5Q7 9 9 9Q13 9 16 12Q19 10 20 6Z" fill="url(#fire)"/><circle cx="19" cy="20" r="7.500" fill="#7b35d8"/><path d="M6 13Q11 9 17 13L22 16Q16 16 15 21Q9 24 6 13Z" fill="#ff9922"/></svg></div>
    <div class="app"><svg viewBox="0 0 38 38"><path d="M11 9V3H27V9" fill="none" stroke="#22b8f5" stroke-width="2.500"/><path d="M2 6H36V33Q36 36 33 36H5Q2 36 2 33Z" fill="#f4f4f4"/><path d="M11 9V5M27 9V5" stroke="#22b8f5" stroke-width="2.500"/><path d="M11 13H18V20H11Z" fill="#f25022"/><path d="M19.500 13H26.500V20H19.500Z" fill="#7fba00"/><path d="M11 21.500H18V28.500H11Z" fill="#00a4ef"/><path d="M19.500 21.500H26.500V28.500H19.500Z" fill="#ffb900"/></svg></div>
    <div class="app"><svg viewBox="0 0 38 38"><circle cx="30.500" cy="9" r="4" fill="#5059c9"/><path d="M25 14H36V25Q34 31 27 29Z" fill="#5059c9"/><circle cx="20" cy="7.500" r="5.500" fill="#7b83eb"/><path d="M12 14H29V26Q28 34 20 34Q13 34 12 26Z" fill="#7b83eb"/><rect x="2" y="9" width="17" height="18" rx="2" fill="#4349b8"/><text x="10.500" y="23.500" text-anchor="middle" font-family="Open Sans, sans-serif" font-weight="700" font-size="14" fill="#fff">T</text></svg></div>
    <div class="app alert"><svg viewBox="0 0 38 38"><circle cx="19" cy="19" r="18" fill="#5865f2"/><path d="M13 11L17 10.500L18 12H21L22 10.500L26 11Q31 19 30 26Q27 29 23.500 29L22.500 27H16.500L15.500 29Q11 29 8 26Q8 18 13 11Z" fill="#fff"/><ellipse cx="15" cy="21" rx="2.400" ry="3" fill="#5865f2"/><ellipse cx="23" cy="21" rx="2.400" ry="3" fill="#5865f2"/></svg><em>9+</em></div>
    <div class="app"><svg class="fu" viewBox="0 0 34 36"><use href="#fusion"/></svg></div>
    <div class="app current"><svg class="fu" viewBox="0 0 34 36"><use href="#fusion"/></svg></div>
  </div>
  <div class="tray">
    <svg class="chev" viewBox="0 0 16 10"><path d="M1 9L8 2L15 9" fill="none" stroke="#fff" stroke-width="1.800"/></svg>
    <svg class="onedrive" viewBox="0 0 24 17"><circle cx="12.500" cy="7" r="7" fill="#999"/><circle cx="6" cy="11" r="6" fill="#ccc"/><path d="M4 16Q8 9 13 10Q16 6 21 8Q26 12 22 16Q14 18 4 16Z" fill="#fff"/></svg>
    <span class="lang">IND</span>
    <svg class="wifi" viewBox="0 0 24 20" fill="none" stroke="#fff" stroke-width="1.800"><path d="M1 8Q12 -4 23 8M4.500 11Q12 3 19.500 11M8 14Q12 9.500 16 14"/><circle cx="12" cy="17" r="1.600" fill="#fff" stroke="none"/></svg>
    <svg class="vol" viewBox="0 0 24 20" fill="none" stroke="#fff" stroke-width="1.600"><path d="M1 7H4L9 2V18L4 13H1Z"/><path d="M12 7Q14 10 12 13M15 4Q19.500 10 15 16"/><path d="M18.500 1Q25 10 18.500 19" stroke="#777"/></svg>
    <svg class="batt" viewBox="0 0 24 20"><rect x="2" y="4" width="18" height="14" rx="2.500" fill="none" stroke="#fff" stroke-width="1.600"/><path d="M5 7H17V15H5ZM21 8H24V14H21Z" fill="#fff"/><path d="M4 -1H8L6 4H10L3 12L4 7H0Z" fill="#fff" stroke="#222" stroke-width="1.200"/></svg>
    <div class="clock"><span>11:27</span><span>28/11/2023</span></div>
    <svg class="bell" viewBox="0 0 20 24"><path d="M1 18Q3 15 3 10Q3 1 10 1Q17 1 17 10Q17 15 19 18V19H1ZM6 21H14Q13 24 10 24Q7 24 6 21Z" fill="#99ebff"/></svg>
  </div>
</footer>
</body>
</html>
```
FILE: styles.css
```css
* { box-sizing: border-box; }

body {
  margin: 0;
  width: 1919px;
  height: 1079px;
  overflow: hidden;
  display: flex;
  flex-direction: column;
  background: #fff;
  color: #333;
  font: 16px/1 "Liberation Sans", Arial, sans-serif;
}

svg { display: block; flex: none; }
.defs { position: absolute; }

.caret {
  display: inline-block;
  flex: none;
  width: 9px;
  height: 8px;
  background: #333;
  clip-path: polygon(0 0, 100% 0, 50% 100%);
}
.caret.dim { background: #636363; }
.caret.faint { background: #949494; }

/* Title bar */
.titlebar {
  height: 34px;
  flex: none;
  display: flex;
  align-items: center;
  background: #f3f3f3;
  padding-left: 3px;
}
.app-icon { width: 22px; height: 24px; }
.app-title {
  margin-left: 7px;
  padding-top: 1px;
  font-family: "Open Sans", "Noto Sans", sans-serif;
  font-size: 17px;
  color: #111;
}
.window-controls {
  margin-left: auto;
  display: flex;
  gap: 54px;
  padding-right: 28px;
}
.window-controls svg { width: 16px; height: 16px; }

/* Document tab bar */
.tabbar {
  height: 48px;
  flex: none;
  display: flex;
  align-items: flex-end;
  background: #cbcbcb;
  border-right: 2px solid #f1f1f1;
}
.quick {
  width: 290px;
  height: 48px;
  display: flex;
  align-items: center;
  padding-left: 13px;
}
.q-grid { width: 22px; height: 22px; }
.q-file { width: 20px; height: 24px; margin: 0 9px 0 28px; }
.q-save { width: 22px; height: 22px; margin: 0 29px; }
.q-undo { width: 20px; height: 20px; margin-right: 9px; }
.q-redo { width: 20px; height: 20px; margin: 0 10px 0 20px; }
.home-tab {
  width: 58px;
  height: 42px;
  border-radius: 7px 7px 0 0;
  background: #b9b9b9;
  display: flex;
  align-items: center;
  justify-content: center;
  padding: 4px 0 0 4px;
}
.home-tab svg { width: 22px; height: 20px; }
.doc-tab {
  width: 1250px;
  height: 42px;
  margin: 0 7px 0 6px;
  border-radius: 7px 7px 0 0;
  background: #f1f1f1;
  display: flex;
  align-items: center;
  padding-left: 496px;
  font-size: 18px;
  letter-spacing: -.04px;
}
.doc-tab span { padding-top: 3px; }
.doc-icon { width: 22px; height: 24px; margin: 3px 8px 0 0; }
.doc-close { width: 13px; height: 13px; margin: 0 11px 0 auto; }
.add-tab {
  width: 41px;
  height: 42px;
  border-radius: 7px 7px 0 0;
  background: #b9b9b9;
  display: flex;
  align-items: center;
  justify-content: center;
}
.add-tab svg { width: 20px; height: 20px; }
.status-icons {
  height: 48px;
  display: flex;
  align-items: center;
  gap: 25.600px;
  padding-left: 17px;
}
.status-icons > svg { width: 24px; height: 24px; }
.avatar {
  width: 38px;
  height: 38px;
  border-radius: 50%;
  background: #efefef;
  display: flex;
  align-items: center;
  justify-content: center;
  font: 18px "Noto Sans", sans-serif;
  margin-left: -1px;
}

/* Ribbon */
.ribbon {
  height: 128px;
  flex: none;
  display: flex;
  background: #f1f1f1;
}
.workspace {
  width: 165px;
  height: 91px;
  margin: 16px 2px 0 17px;
  border: 2px solid #cbcbcb;
  border-radius: 6px;
  background: #f2f2f2;
  color: #333;
  display: flex;
  align-items: center;
  justify-content: center;
  gap: 6px;
  padding: 0;
  font: bold 16px "Liberation Sans", Arial, sans-serif;
}
.toolbox { flex: 1; }
.tabs {
  height: 36px;
  display: flex;
  padding-left: 24px;
}
.tabs span {
  height: 36px;
  padding-top: 9px;
  white-space: nowrap;
  text-align: center;
}
.t1 { width: 85px; }
.tabs .active { color: #0696d7; border-bottom: 5px solid #0696d7; }
.t2 { width: 176px; }
.t3 { width: 88px; }
.t4 { width: 147px; }
.t5 { width: 152px; }
.t6 { width: 172px; }
.t7 { width: 115px; }
.groups { display: flex; padding-top: 4px; }
.group { height: 76px; border-right: 2px solid #cfcfcf; }
.group:last-child { border-right: 0; }
.icons {
  height: 50px;
  display: flex;
  justify-content: center;
  align-items: center;
  gap: 16.500px;
}
.icons svg { width: 48px; height: 50px; }
.icons .select-icon { width: 58px; height: 58px; }
.label {
  height: 34px;
  display: flex;
  align-items: center;
  justify-content: center;
  gap: 5px;
  letter-spacing: .2px;
  padding-top: 1px;
}
.g-create { width: 344px; }
.g-create .icons { gap: 16px; padding-left: 5px; }
.g-automate { width: 148px; }
.g-modify { width: 339px; }
.g-modify .icons { padding-left: 2px; }
.g-modify .label { padding-right: 4px; }
.g-assemble { width: 147px; }
.g-configure { width: 156px; }
.g-configure .icons { padding-left: 3px; }
.g-construct { width: 156px; }
.g-construct .label, .g-construct .icons { padding-left: 3px; }
.g-inspect { width: 126px; }
.g-inspect .icons { padding-left: 3px; }
.g-insert { width: 145px; }
.g-insert .icons { padding-left: 4px; gap: 15px; }
.g-select { width: 119px; }

/* Model view and its overlays */
.viewport {
  height: 798px;
  flex: none;
  position: relative;
}
.silk, .silk-small { font-family: "DejaVu Sans Mono", monospace; paint-order: stroke; }
.silk { font-size: 30.5px; fill: #a09987; stroke: #15130f; stroke-width: 1.900px; }
.silk-small {
  font-size: 16.5px;
  text-anchor: middle;
  fill: #9a9381;
  stroke: #15130f;
  stroke-width: 1.900px;
}
.browser {
  position: absolute;
  left: 6px;
  top: 6px;
  width: 449px;
  display: flex;
  flex-direction: column;
}
.panel-head {
  height: 37px;
  display: flex;
  align-items: center;
  border: 1px solid #c6c6c6;
  border-bottom-width: 2px;
  background: #f1f1f1;
  padding: 1px 16px 0 6px;
  color: #666;
  letter-spacing: .15px;
}
.panel-head.comments { margin-top: 35px; padding-left: 37px; border-top: 0; }
.collapse { width: 16px; height: 10px; margin-right: 14px; }
.knob { width: 14px; height: 14px; margin-left: auto; }
.tree {
  display: flex;
  height: 669px;
  margin-top: 8px;
  padding-left: 6px;
}
.scroll {
  width: 9px;
  height: 669px;
  background: #c8cacc;
  padding-top: 197px;
}
.thumb {
  height: 277px;
  border-radius: 5px;
  border: 1px solid #858688;
  background: #9b9c9e;
}
.tree ul {
  list-style: none;
  margin: 0;
  padding: 0 0 0 66px;
  display: flex;
  flex-direction: column;
  gap: 6px;
}
.tree li { display: flex; align-items: center; height: 30px; }
.tree .folder-row { margin-left: -26px; }
.tw { width: 10px; height: 14px; margin-right: 16px; }
.cell {
  height: 30px;
  display: flex;
  align-items: center;
  padding-left: 5px;
  background: linear-gradient(90deg, #f1f1f1 37px, #f5f5f5 37px, #f5f5f5 38px, #f1f1f1 38px);
  letter-spacing: .1px;
}
.cell span { padding-top: 1px; }
.w129 { width: 129px; }
.w135 { width: 135px; }
.w141 { width: 141px; }
.w172 { width: 172px; }
.w196 { width: 196px; }
.ext { width: 23px; height: 25px; margin-right: 21px; }
.eye { width: 24px; height: 16px; margin-right: 13px; }
.fold { width: 24px; height: 20px; margin-right: 21px; }

.navbar {
  position: absolute;
  left: 783px;
  top: 753px;
  width: 356px;
  height: 36px;
  display: flex;
  align-items: center;
  background: linear-gradient(#cfe5f3, #cfe5f3) 88px 100% / 39px 1px no-repeat #f1f1f1;
  padding-left: 5px;
}
.navbar svg { width: 24px; height: 24px; margin-top: -2px; }
.navbar .n1 { margin-right: 7px; }
.navbar .n2 { margin: -2px 15px 0 9px; }
.navbar .n4 { margin: -2px 15px 0 15px; }
.navbar .n5 { margin-right: 7px; }
.navbar .n6 { margin: -2px 3px 0 10px; }
.navbar .n7 { margin: -2px 3px 0 10px; }
.navbar .n8 { margin: -2px 3px 0 11px; }

/* Windows taskbar */
.taskbar {
  height: 71px;
  flex: none;
  display: flex;
  align-items: center;
  background: #222;
  border-top: 2px solid #454545;
  color: #fff;
  font-family: "Open Sans", "Noto Sans", sans-serif;
}
.weather {
  width: 543px;
  display: flex;
  align-items: center;
  padding-left: 29px;
  gap: 5px;
}
.weather svg { width: 42px; height: 46px; margin-top: -5px; }
.weather b, .weather small {
  display: block;
  font-weight: 400;
  font-size: 16.5px;
  line-height: 24px;
}
.weather div { margin-top: -3px; }
.weather small { color: #ccc; }
.start svg { width: 35px; height: 35px; }
.search {
  width: 330px;
  height: 48px;
  margin-left: 20px;
  border-radius: 24px;
  border: 1px solid #555;
  border-top: 2px solid #666;
  background: #3f3f3f;
  display: flex;
  align-items: center;
  gap: 15px;
  padding: 0 0 2px 17px;
  font-size: 19.5px;
  color: #d0d0d0;
}
.search svg { width: 23px; height: 23px; }
.apps { display: flex; gap: 6px; margin-left: 6px; }
.app {
  position: relative;
  width: 60px;
  height: 60px;
  border-radius: 6px;
  display: flex;
  align-items: center;
  justify-content: center;
}
.app svg { width: 38px; height: 38px; }
.app .fu { width: 34px; height: 36px; }
.app.alert { background: #422629; }
.app.current { background: #2f2f2f; border: 1px solid #3b3b3b; }
.app.running::after, .app.alert::after, .app.current::after {
  content: "";
  position: absolute;
  bottom: 1px;
  left: calc(50% - 4px);
  width: 9px;
  height: 5px;
  border-radius: 3px;
  background: #999;
}
.app.alert::after { background: #ff99a4; }
.app.current::after { left: calc(50% - 12px); bottom: 0; width: 24px; background: #4cc2ff; }
.app em {
  position: absolute;
  right: 5px;
  top: 6px;
  width: 21px;
  height: 21px;
  border-radius: 50%;
  background: #f05454;
  font: 600 14.5px/20px "Open Sans", sans-serif;
  text-align: center;
}
.tray {
  margin-left: auto;
  display: flex;
  align-items: center;
  padding-right: 31px;
}
.tray svg { margin-top: -2px; }
.chev { width: 16px; height: 10px; }
.tray .onedrive { width: 24px; height: 17px; margin: -2px 30px 0 28px; }
.lang { width: 32px; margin-top: -2px; font-size: 17px; }
.wifi, .vol, .batt { width: 24px; height: 20px; overflow: visible; }
.wifi { margin-left: 28px; }
.tray .vol { margin: -2px 12px 0; }
.clock {
  width: 118px;
  margin-top: -2px;
  display: flex;
  flex-direction: column;
  align-items: flex-end;
  font-size: 17px;
  line-height: 24px;
  letter-spacing: .1px;
}
.bell { width: 20px; height: 24px; margin-left: 13px; }
```
